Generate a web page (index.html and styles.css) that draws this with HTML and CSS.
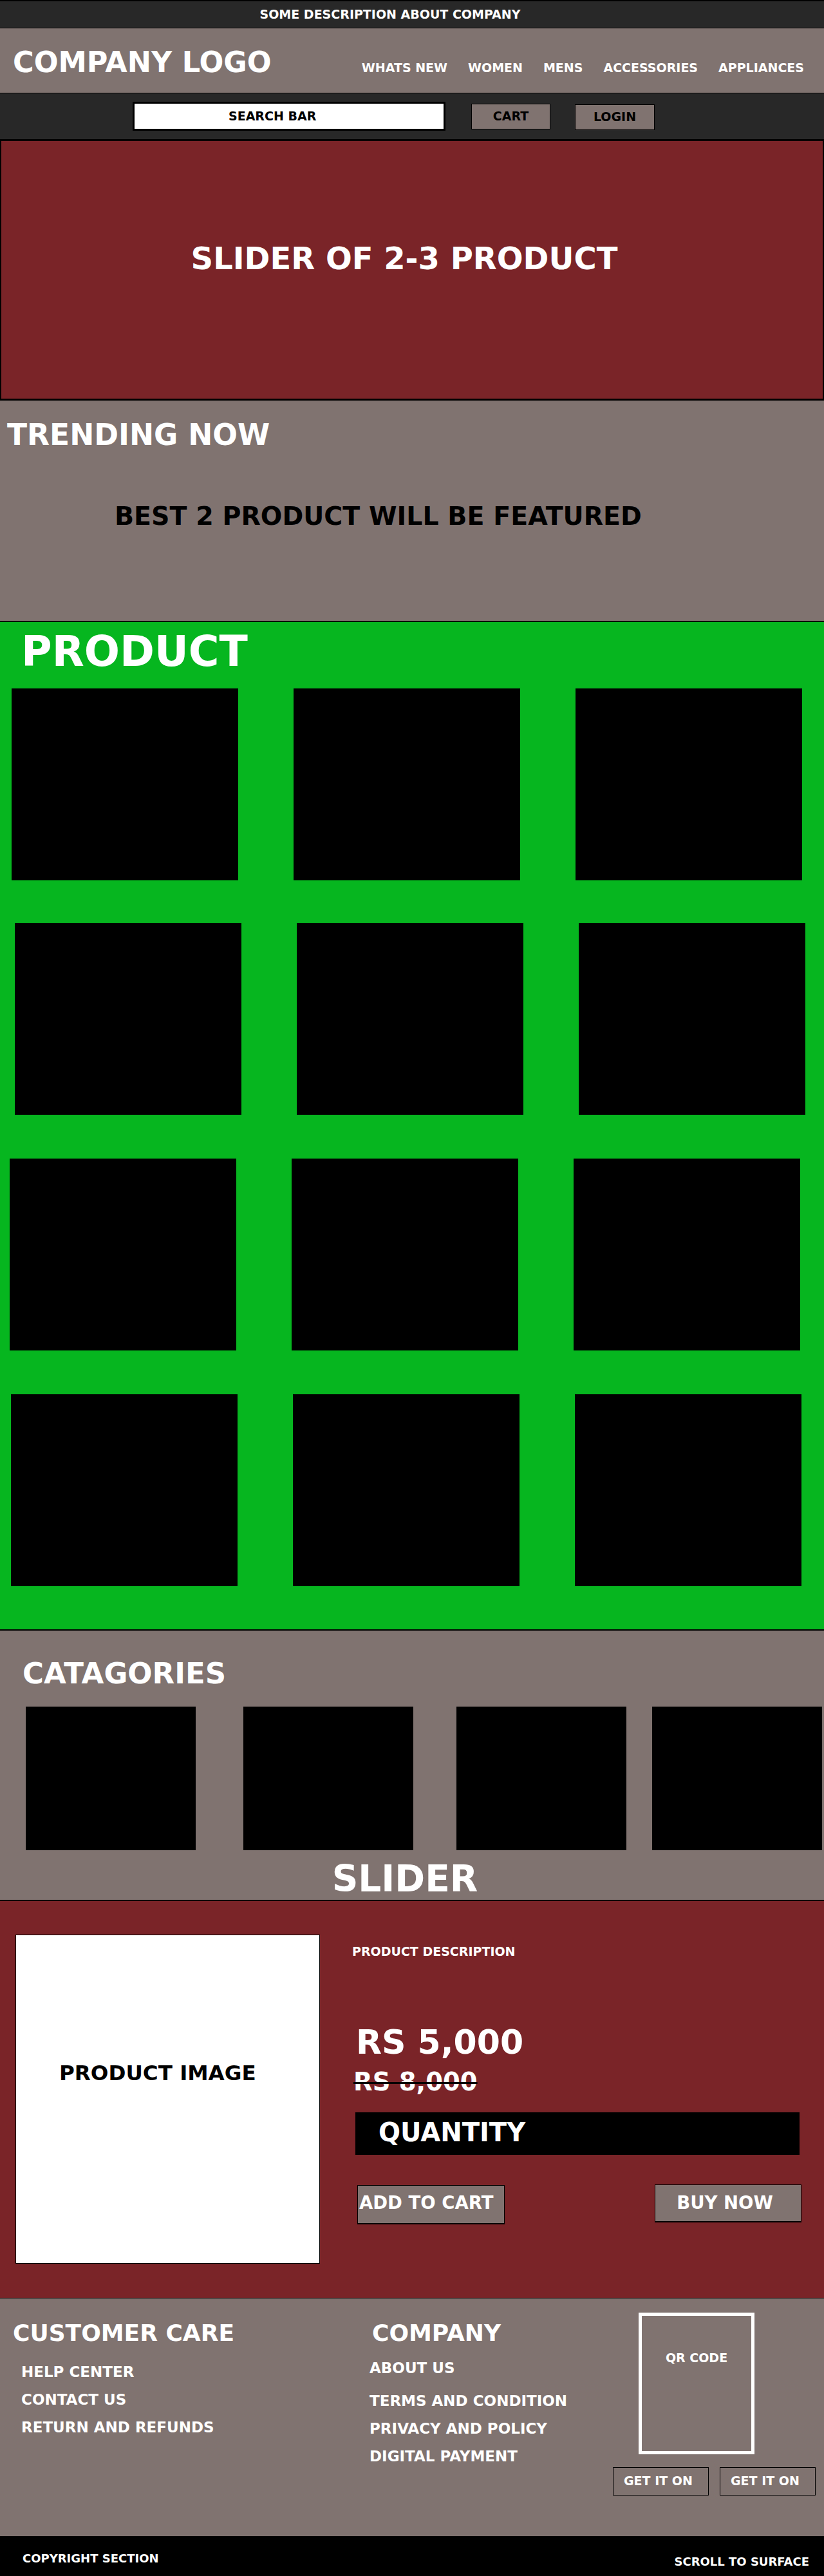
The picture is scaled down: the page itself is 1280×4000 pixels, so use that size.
FILE: index.html
```html
<!DOCTYPE html>
<html lang="en">
<head>
<meta charset="utf-8">
<title>Company Store</title>
<link rel="stylesheet" href="styles.css">
</head>
<body>
<div class="topbar">SOME DESCRIPTION ABOUT COMPANY</div>

<header class="header">
  <div class="logo">COMPANY LOGO</div>
  <nav class="nav">
    <a>WHATS NEW</a>
    <a>WOMEN</a>
    <a>MENS</a>
    <a>ACCESSORIES</a>
    <a>APPLIANCES</a>
  </nav>
</header>

<div class="searchrow">
  <div class="search">SEARCH BAR</div>
  <div class="btn btn-cart">CART</div>
  <div class="btn btn-login">LOGIN</div>
</div>

<section class="hero">SLIDER OF 2-3 PRODUCT</section>

<section class="trending">
  <h2 class="trend-title">TRENDING NOW</h2>
  <p class="best">BEST 2 PRODUCT WILL BE FEATURED</p>
</section>

<section class="products">
  <h2 class="prod-title">PRODUCT</h2>
  <div class="prow r1"><div class="tile"></div><div class="tile"></div><div class="tile"></div></div>
  <div class="prow r2"><div class="tile"></div><div class="tile"></div><div class="tile"></div></div>
  <div class="prow r3"><div class="tile"></div><div class="tile"></div><div class="tile"></div></div>
  <div class="prow r4"><div class="tile"></div><div class="tile"></div><div class="tile"></div></div>
</section>

<section class="categories">
  <h2 class="cat-title">CATAGORIES</h2>
  <div class="cats">
    <div class="cat c1"></div>
    <div class="cat c2"></div>
    <div class="cat c3"></div>
    <div class="cat c4"></div>
  </div>
  <div class="cat-slider">SLIDER</div>
</section>

<section class="detail">
  <div class="pimage">PRODUCT IMAGE</div>
  <div class="pinfo">
    <div class="desc">PRODUCT DESCRIPTION</div>
    <div class="price">RS 5,000</div>
    <div class="old">RS 8,000</div>
    <div class="qty">QUANTITY</div>
    <div class="actions">
      <div class="add">ADD TO CART</div>
      <div class="buy">BUY NOW</div>
    </div>
  </div>
</section>

<footer class="footer">
  <div class="fcol fcol1">
    <h3 class="fhead">CUSTOMER CARE</h3>
    <ul class="links links1">
      <li>HELP CENTER</li>
      <li>CONTACT US</li>
      <li>RETURN AND REFUNDS</li>
    </ul>
  </div>
  <div class="fcol fcol2">
    <h3 class="fhead fhead2">COMPANY</h3>
    <ul class="links links2">
      <li class="about">ABOUT US</li>
      <li class="terms">TERMS AND CONDITION</li>
      <li>PRIVACY AND POLICY</li>
      <li>DIGITAL PAYMENT</li>
    </ul>
  </div>
  <div class="fcol fcol3">
    <div class="qr">QR CODE</div>
    <div class="apps">
      <div class="app">GET IT ON</div>
      <div class="app">GET IT ON</div>
    </div>
  </div>
</footer>

<div class="bottombar">
  <span class="copy">COPYRIGHT SECTION</span>
  <span class="scroll">SCROLL TO SURFACE</span>
</div>
</body>
</html>
```

FILE: styles.css
```css
* { box-sizing: border-box; margin: 0; padding: 0; }

body {
  margin: 0;
  font-family: "DejaVu Sans", "Liberation Sans", sans-serif;
  font-weight: bold;
  line-height: 1;
  color: #fff;
  background: #fff;
}

/* top description bar */
.topbar {
  height: 44px;
  background: #282828;
  border-top: 2px solid #000;
  border-bottom: 1px solid #000;
  padding-top: 11px;
  padding-right: 68px;
  font-size: 19px;
  text-align: center;
}

/* header */
.header {
  height: 101px;
  background: #807370;
  border-bottom: 1px solid #000;
  display: flex;
  align-items: baseline;
  padding: 31px 31px 0 20px;
}
.logo { font-size: 44.5px; }
.nav {
  margin-left: auto;
  display: flex;
  gap: 32px;
  font-size: 19px;
}

/* search row */
.searchrow {
  height: 74px;
  background: #282828;
  border-bottom: 3px solid #000;
  display: flex;
  align-items: center;
  padding-left: 206px;
}
.search {
  width: 486px;
  height: 45px;
  border: 3px solid #000;
  background: #fff;
  color: #000;
  font-size: 19px;
  display: flex;
  align-items: center;
  padding-left: 146px;
}
.btn {
  height: 40px;
  border: 1px solid #000;
  background: #807370;
  color: #000;
  font-size: 19px;
  display: flex;
  align-items: center;
  justify-content: center;
}
.btn-cart { width: 123px; margin-left: 40px; }
.btn-login { width: 124px; margin-left: 38px; margin-top: 2px; }

/* hero slider */
.hero {
  height: 403px;
  background: #7a2428;
  border-left: 2px solid #000;
  border-right: 2px solid #000;
  border-bottom: 3px solid #000;
  padding-top: 158px;
  padding-right: 24px;
  font-size: 48px;
  text-align: center;
}

/* trending */
.trending {
  height: 344px;
  background: #807370;
  border-bottom: 2px solid #000;
  padding: 31px 0 0 11px;
}
.trend-title { font-size: 45.5px; }
.best {
  margin: 83px 0 0 167px;
  font-size: 39.5px;
  color: #000;
}

/* products */
.products {
  height: 1566px;
  background: #06b61f;
  border-bottom: 2px solid #000;
  padding-top: 13px;
}
.prod-title {
  font-size: 65px;
  margin-left: 33px;
}
.prow {
  display: flex;
  gap: 86px;
}
.tile {
  width: 352px;
  height: 298px;
  background: #000;
}
.r1 { margin-top: 25px; padding-left: 18px; }
.r2 { margin-top: 66px; padding-left: 23px; }
.r3 { margin-top: 68px; padding-left: 15px; }
.r4 { margin-top: 68px; padding-left: 17px; }

/* categories */
.categories {
  height: 420px;
  background: #807370;
  border-bottom: 2px solid #000;
  padding-top: 44px;
  overflow: hidden;
}
.cat-title {
  font-size: 45px;
  margin-left: 35px;
}
.cats {
  display: flex;
  margin-top: 29px;
}
.cat {
  width: 264px;
  height: 223px;
  background: #000;
  flex: none;
}
.c1 { margin-left: 40px; }
.c2 { margin-left: 74px; }
.c3 { margin-left: 67px; }
.c4 { margin-left: 40px; }
.cat-slider {
  margin-top: 17px;
  font-size: 56.5px;
  text-align: center;
  padding-right: 22px;
}

/* product detail */
.detail {
  height: 617px;
  background: #7a2428;
  border-bottom: 1px solid #000;
  display: flex;
  padding: 52px 0 0 24px;
}
.pimage {
  width: 473px;
  height: 511px;
  background: #fff;
  border: 1px solid #000;
  color: #000;
  font-size: 32.5px;
  padding: 198px 0 0 67px;
  flex: none;
}
.pinfo {
  margin-left: 50px;
  display: flex;
  flex-direction: column;
  align-items: flex-start;
}
.desc { margin-top: 17px; font-size: 19px; }
.price { margin: 105px 0 0 6px; font-size: 52px; }
.old {
  margin: 17px 0 0 2px;
  font-size: 38.5px;
  text-decoration: line-through;
  text-decoration-color: #000;
  text-decoration-thickness: 3px;
}
.qty {
  margin: 27px 0 0 5px;
  width: 690px;
  height: 66px;
  background: #000;
  font-size: 40px;
  padding: 11px 0 0 36px;
}
.actions {
  display: flex;
  align-items: flex-start;
  margin-top: 46px;
}
.add {
  margin: 1px 0 0 8px;
  width: 229px;
  height: 61px;
  background: #807370;
  border: 1px solid #000;
  border-bottom-width: 2px;
  font-size: 27.5px;
  padding: 13px 0 0 2px;
  white-space: nowrap;
}
.buy {
  margin-left: 233px;
  width: 228px;
  height: 59px;
  background: #807370;
  border: 1px solid #000;
  border-bottom-width: 2px;
  font-size: 27.5px;
  padding: 14px 10px 0 0;
  text-align: center;
  white-space: nowrap;
}

/* footer */
.footer {
  height: 369px;
  background: #807370;
  display: flex;
}
.fcol1 { width: 574px; padding: 36px 0 0 20px; }
.fcol2 { width: 378px; padding-top: 36px; }
.fcol3 { width: 328px; padding-top: 22px; }
.fhead { font-size: 36px; }
.fhead2 { margin-left: 4px; }
.links { list-style: none; font-size: 23px; }
.links1 { margin: 31px 0 0 13px; }
.links1 li + li { margin-top: 20px; }
.links2 { margin-top: 25px; }
.links2 li + li { margin-top: 20px; }
.links2 .terms { margin-top: 28px; }
.qr {
  margin-left: 40px;
  width: 180px;
  height: 220px;
  border: 5px solid #fff;
  font-size: 19px;
  text-align: center;
  padding-top: 56px;
}
.apps {
  display: flex;
  gap: 17px;
  margin-top: 20px;
}
.app {
  width: 149px;
  height: 44px;
  border: 1px solid #000;
  font-size: 19px;
  padding: 11px 0 0 16px;
  white-space: nowrap;
}

/* bottom bar */
.bottombar {
  height: 62px;
  background: #000;
  display: flex;
  justify-content: space-between;
  align-items: flex-start;
  padding: 26px 23px 0 35px;
  font-size: 18px;
}
.scroll { margin-top: 5px; }
```
